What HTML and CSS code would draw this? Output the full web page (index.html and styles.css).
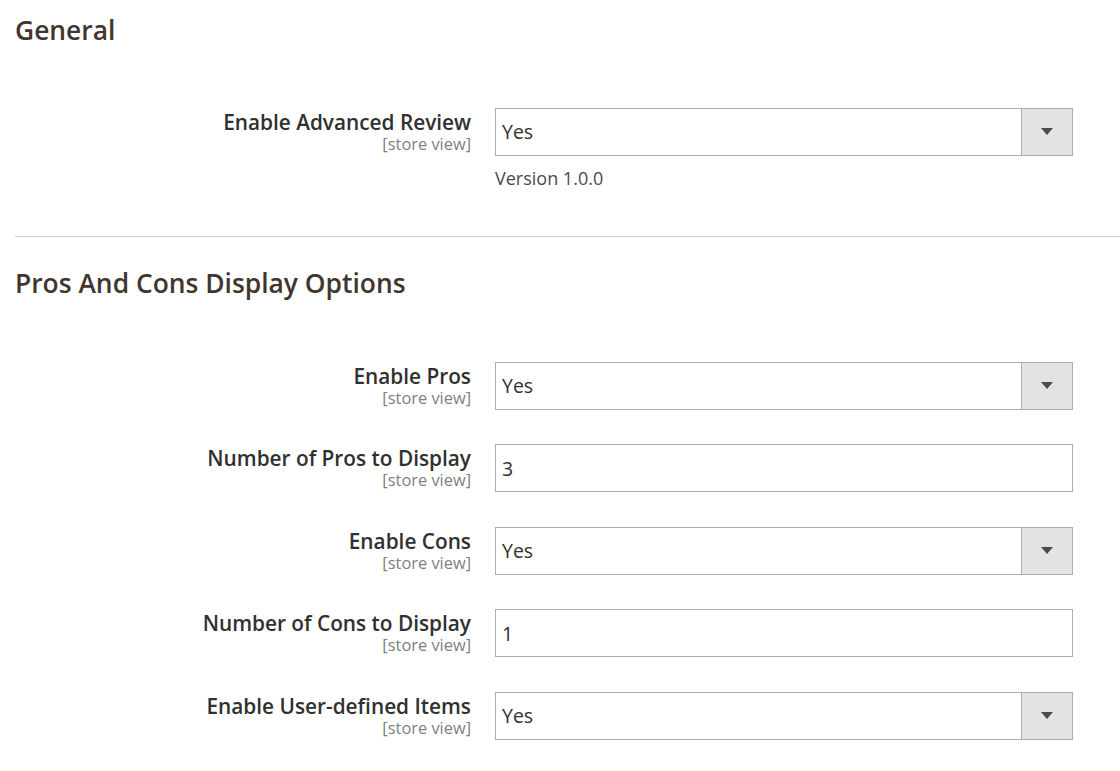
FILE: index.html
```html
<!DOCTYPE html>
<html>
<head>
<meta charset="utf-8">
<link rel="stylesheet" href="styles.css">
</head>
<body>
<div class="page">
  <section class="group group-first">
    <h2 class="group-title">General</h2>
    <div class="fields">
      <div class="row">
        <div class="label"><span class="label-text">Enable Advanced Review</span><span class="scope">[store view]</span></div>
        <div class="control">
          <div class="select"><span class="select-value">Yes</span><span class="select-arrow"><svg width="12" height="7" viewBox="0 0 12 7"><path d="M0 0H12L6 7Z" fill="#514943"/></svg></span></div>
          <p class="note">Version 1.0.0</p>
        </div>
      </div>
    </div>
  </section>
  <section class="group group-second">
    <h2 class="group-title">Pros And Cons Display Options</h2>
    <div class="fields">
      <div class="row">
        <div class="label"><span class="label-text">Enable Pros</span><span class="scope">[store view]</span></div>
        <div class="control">
          <div class="select"><span class="select-value">Yes</span><span class="select-arrow"><svg width="12" height="7" viewBox="0 0 12 7"><path d="M0 0H12L6 7Z" fill="#514943"/></svg></span></div>
        </div>
      </div>
      <div class="row">
        <div class="label"><span class="label-text">Number of Pros to Display</span><span class="scope">[store view]</span></div>
        <div class="control">
          <input class="text-input" type="text" value="3">
        </div>
      </div>
      <div class="row">
        <div class="label"><span class="label-text">Enable Cons</span><span class="scope">[store view]</span></div>
        <div class="control">
          <div class="select"><span class="select-value">Yes</span><span class="select-arrow"><svg width="12" height="7" viewBox="0 0 12 7"><path d="M0 0H12L6 7Z" fill="#514943"/></svg></span></div>
        </div>
      </div>
      <div class="row">
        <div class="label"><span class="label-text">Number of Cons to Display</span><span class="scope">[store view]</span></div>
        <div class="control">
          <input class="text-input" type="text" value="1">
        </div>
      </div>
      <div class="row">
        <div class="label"><span class="label-text">Enable User-defined Items</span><span class="scope">[store view]</span></div>
        <div class="control">
          <div class="select"><span class="select-value">Yes</span><span class="select-arrow"><svg width="12" height="7" viewBox="0 0 12 7"><path d="M0 0H12L6 7Z" fill="#514943"/></svg></span></div>
        </div>
      </div>
    </div>
  </section>
</div>
</body>
</html>
```
FILE: styles.css
```css
html, body {
  margin: 0;
  padding: 0;
  background: #ffffff;
}
body {
  font-family: "Open Sans", "Liberation Sans", sans-serif;
  color: #303030;
  overflow: hidden;
}
.page {
  padding-left: 15px;
}
.group-first {
  padding-top: 14.9px;
  padding-bottom: 12.5px;
  border-bottom: 1px solid #cccccc;
}
.group-second {
  padding-top: 31.2px;
}
.group-title {
  margin: 0;
  font-size: 26.4px;
  line-height: 30px;
  font-weight: 600;
  color: #41362f;
}
.group-first .fields {
  padding-top: 63.1px;
}
.group-second .fields {
  padding-top: 63.8px;
}
.row {
  display: grid;
  grid-template-columns: 456px 578px;
  column-gap: 24px;
  margin-bottom: 34.5px;
}
.label {
  display: flex;
  flex-direction: column;
  align-items: flex-end;
  padding-top: 3.9px;
  text-align: right;
}
.label-text {
  font-size: 20.8px;
  line-height: 20px;
  font-weight: 600;
  color: #303030;
  white-space: nowrap;
}
.scope {
  margin-top: 5px;
  font-size: 16.4px;
  line-height: 14px;
  color: #808080;
}
.control {
  display: flex;
  flex-direction: column;
}
.select {
  display: flex;
  height: 48px;
  box-sizing: border-box;
  border: 1px solid #adadad;
  background: #ffffff;
}
.select-value {
  flex: 1;
  padding-left: 6px;
  font-size: 19.5px;
  line-height: 46px;
  color: #303030;
}
.select-arrow {
  width: 50px;
  border-left: 1px solid #adadad;
  background: #e3e3e3;
  display: flex;
  align-items: center;
  justify-content: center;
}
.text-input {
  height: 48px;
  box-sizing: border-box;
  border: 1px solid #adadad;
  border-radius: 0;
  margin: 0;
  padding: 0 0 0 6px;
  font-family: "Open Sans", "Liberation Sans", sans-serif;
  font-size: 19.5px;
  color: #303030;
  background: #ffffff;
  outline: none;
}
.note {
  margin: 11px 0 0;
  font-size: 18px;
  line-height: 22px;
  color: #4a4a4a;
}
```
